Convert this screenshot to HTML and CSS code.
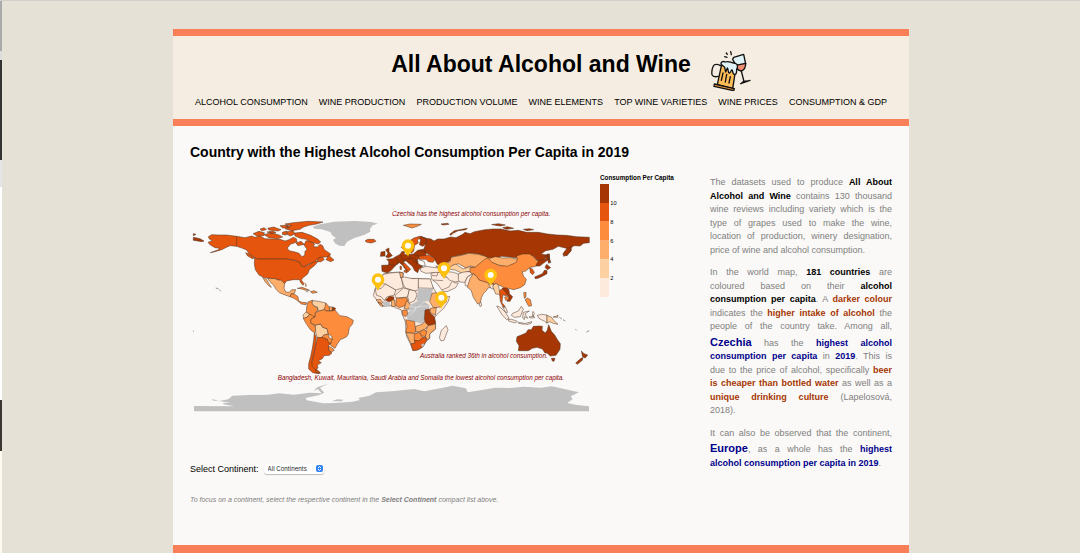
FILE: index.html
```html
<!DOCTYPE html>
<html lang="en">
<head>
  <meta charset="UTF-8" />
  <meta name="viewport" content="width=device-width, initial-scale=1.0" />
  <title>All About Alcohol and Wine</title>
  <link rel="stylesheet" href="styles.css">
</head>
<body>
  <div class="container">
    <header class="site-header">
      <div class="site-title">
        <h1>All About Alcohol and Wine</h1>
        <svg class="logo" viewBox="33 17 120 120" aria-hidden="true">
          <g stroke="#111" stroke-width="4" stroke-linejoin="round" stroke-linecap="round" fill="none">
            <path d="M79 23l3 4M92 19l2 9M74 34l7 2" />
            <path fill="#dff2f7" d="M101 36L131 27L137 56L108 60L98 42Z" />
            <path fill="#f08d72" d="M107 60L137 54C137 66 132 75 124 77C116 76 110 72 109 61Z" />
            <path d="M124 77L132 109M122 115L150 105M123 115L131 108L143 107" />
            <path d="M61 61C57 57 44 54 40 62C36 70 35 82 36 88C40 97 51 94 55 93" />
            <path fill="#ffbd59" d="M65 57L52 118L98 130L107 72Z" />
            <path fill="#dff2f7" d="M63 57C62 46 72 48 76 50C86 45 97 55 106 54C115 57 113 65 110 72C110 82 109 88 103 87C97 87 99 75 96 74C92 73 93 84 88 83C83 82 86 72 82 68L77 80L74 66Z" />
            <path d="M69 83L64 105M80 87L76 110M91 94L87 113" />
            <path fill="#f49a3d" d="M43 116L103 130L101 136L42 123Z" />
          </g>
        </svg>
      </div>
      <nav class="site-nav">
        <a href="#consumption">ALCOHOL CONSUMPTION</a>
        <a href="#production">WINE PRODUCTION</a>
        <a href="#volume">PRODUCTION VOLUME</a>
        <a href="#elements">WINE ELEMENTS</a>
        <a href="#varieties">TOP WINE VARIETIES</a>
        <a href="#prices">WINE PRICES</a>
        <a href="#gdp">CONSUMPTION &amp; GDP</a>
      </nav>
    </header>

    <main class="content" id="consumption">
      <h2>Country with the Highest Alcohol Consumption Per Capita in 2019</h2>
      <div class="columns">
        <section class="map-column">
          <svg class="map" viewBox="15 -90 1500 750" role="img" aria-label="World map of alcohol consumption per capita">
            <defs>
              <g id="pin">
                <path fill="#fec10d" d="M0 0C-4-13-19-20-19-33A19 19 0 0 1 19-33C19-20 4-13 0 0Z" />
                <circle fill="#fff" cy="-33" r="9" />
              </g>
            </defs>

            <!-- Americas -->
            <g class="land">
              <path class="l12" d="M25 101l8 2-8 4zM25 112l20 4 12 7-6 2-26-4z" />
              <path class="l10" d="M70 110L80 104L100 105L125 105L155 109L180 113L200 108L210 112L225 108L240 116L262 117L285 118L300 123L312 119L325 112L334 116L336 126L316 133L307 144L312 152L330 156L342 160L351 170L359 166L360 154L366 148L357 135L363 122L378 124L388 132L386 140L397 141L405 133L413 137L418 149L437 162L432 170L412 172L398 177L388 188L372 192L357 200L349 198L345 188L328 181L305 177L218 177L207 172L192 161L185 150L170 144L155 139L135 137L122 143L110 149L90 155L76 158L98 150L104 145L90 143L76 135L69 127L82 122L73 117Z" />
              <path class="border" d="M155 109V139" />
              <path class="l10" d="M209 174L218 177L305 177L328 181L345 188L349 198L357 200L372 194L388 185L400 184L388 197L373 209L368 222L353 234L349 240L357 251L354 256L346 246L344 239L325 239L304 243L299 251L289 241L279 240L270 236L248 235L235 232L222 225L211 209L208 192Z" />
              <path class="l10" d="M399 174l13-3 6 8-12 7-9-2zM423 179l8-13 16 14-10 5zM182 158l12 5 14 11-6 2-15-9z" />
              <path class="l10" d="M204 101L222 94L238 98L236 107L216 108ZM237 104L258 98L282 105L293 111L278 116L252 113ZM225 87L238 83L244 89L230 92ZM248 85L266 81L288 89L279 93L252 90ZM292 97L305 93L304 105L293 104ZM306 95L325 92L329 102L316 108L306 103ZM246 96l17-3 10 5-13 3z" />
              <path class="l10" d="M328 99L351 97L377 106L398 117L407 126L400 132L378 127L364 118L346 115L330 108ZM333 129l15-5 10 9-19 4zM285 77l22-2 6 8-20 1z" />
              <path class="l10" d="M300 72L325 68L370 64L414 66L395 72L372 76L356 81L345 88L320 92L300 86L313 82L303 78L320 77Z" />
              <path class="l6" d="M248 235L270 236L279 240L289 241L299 251L297 265L302 276L313 277L320 269L332 269L328 280L318 282L315 290L300 285L283 278L273 268L267 257L253 243ZM233 232L244 238L259 262L253 259L240 245Z" />
              <path class="l8" d="M315 290L319 281L329 283L339 290L341 303L351 307L365 308L363 314L349 312L335 300L327 295Z" />
              <path class="l8" d="M337 265L352 262L374 271L363 271L347 266ZM376 275l11-3 10 5-14 3zM359 249l5 5-2 7M363 274l7 2" />
              <path class="l8" d="M369 306L383 300L381 309L388 319L398 323L397 334L391 337L390 352L378 347L364 337L365 320Z" />
              <path class="l4" d="M383 302L402 304L423 309L424 318L417 329L401 334L397 321L386 317L381 309Z" />
              <path class="l8" d="M423 310L432 320L434 332L423 333L418 326Z" />
              <path class="l6" d="M433 320L443 321L441 333L434 332Z" />
              <path class="l12" d="M443 321L452 325L447 334L441 332Z" />
              <path class="l4" d="M363 336L374 342L368 351L356 356L354 345Z" />
              <path class="l8" d="M355 355L368 351L374 342L390 352L379 357L377 369L389 376L393 389L389 399L376 389L361 367Z" />
              <path class="l4" d="M391 375L407 372L413 382L426 386L430 401L416 406L410 413L397 413L392 397Z" />
              <path class="l8" d="M378 357L390 351L392 337L401 334L417 329L424 333L440 333L450 330L459 341L465 347L486 350L505 361L503 371L493 383L490 402L484 411L466 419L457 432L450 445L438 437L431 428L442 419L440 408L430 402L426 386L413 382L407 372L391 375L377 369Z" />
              <path class="l8" d="M411 412L416 405L430 403L433 414L441 417L438 430L428 429L427 418Z" />
              <path class="l8" d="M430 438L443 445L448 451L440 455L430 452Z" />
              <path class="l10" d="M388 399L394 412L391 440L387 462L381 485L384 500L397 510L406 518L400 521L383 518L371 507L371 491L377 469L382 445L386 419Z" />
              <path class="l10" d="M397 413L411 412L427 418L431 429L438 429L430 438L431 451L441 459L433 466L417 467L412 476L400 482L409 488L397 495L399 504L391 509L381 499L381 485L387 462L391 440Z" />
              <path class="l10" d="M391 511l4 0 11 9-13-2z" />
              <path class="l10" d="M92 264l8 2M102 268l6 6M24 393l3 1" />
            </g>
            <path class="nodata" d="M383 80L405 73L447 65L510 63L560 66L579 71L563 76L555 86L556 95L542 103L525 109L508 114L486 125L478 138L463 137L450 130L444 119L453 114L441 106L436 96L410 88L388 86Z" />

            <!-- Europe, Africa and Russia -->
            <g class="land" transform="translate(495)">
              <path class="l10" d="M45 123L53 118L72 118L78 124L64 129L51 127Z" />
              <path class="l8" d="M160 76L180 72L214 73L202 79L185 84L174 80Z" />
              <path class="l12" d="M273 72l20-2 4 3-18 2zM299 103L313 92L352 85L348 89L325 92L309 100L303 106Z" />
              <path class="l12" d="M212 109L229 115L243 117L252 123L263 117L282 117L302 111L318 113L338 103L345 97L360 101L373 95L405 89L428 87L453 87L480 93L505 91L530 97L565 97L593 102L622 105L648 106L680 110L718 112L718 128L701 130L690 138L672 137L663 143L664 151L650 168L641 160L654 146L625 139L609 148L587 152L573 162L590 165L584 178L571 195L558 196L563 182L550 169L532 161L520 171L502 174L480 171L455 169L439 174L420 177L403 168L385 162L357 159L333 165L304 171L301 182L288 188L282 201L262 193L256 182L251 174L240 166L226 157L222 145L229 128L218 120Z" />
              <path class="l12" d="M425 74l20-3 21 4-15 3zM458 83l14-3 19 5-22 3zM520 88l18-2 13 3-20 3zM597 161l3 21-5 5z" />
              <path class="l12" d="M212 109L229 116L228 132L218 139L208 134L212 120L205 113Z" />
              <path class="l10" d="M154 142L161 132L176 125L190 115L208 109L211 113L202 120L205 129L194 136L191 153L184 160L176 148L164 152Z" />
              <path class="l12" d="M107 149L117 144L117 155L127 167L116 173L107 171L114 160ZM93 156L105 154L105 168L91 169Z" />
              <path class="l12" d="M95 196L116 195L116 184L110 178L127 176L137 170L151 163L155 155L163 154L164 164L190 162L203 151L223 147L229 159L226 172L202 177L205 192L218 199L207 208L203 218L194 212L187 199L174 188L168 182L160 186L177 205L170 213L157 195L148 188L137 196L124 211L112 219L96 214Z" />
              <path class="l10" d="M205 169L235 165L256 177L249 187L235 185L228 178L208 178Z" />
              <path class="border" d="M116 193l22 4M137 171l8 12-4 12M151 163l7 17M178 162l2 14-22 5M192 164l14 4M180 174l18 4 2 15M206 179l16 5 4 13-16 1M190 187l12-6M208 151l20 5" />
              <path class="l10" d="M155 188L166 191L182 208L174 215L161 197ZM163 211l11 3-4 5-8-4zM150 198l5 2-1 9-4-1z" />
              <path class="l2" d="M211 205L228 199L248 202L265 204L278 209L273 217L249 218L228 220L213 214Z" />
              <path class="l4" d="M257 198L279 202L288 209L275 210Z" />
              <path class="l2" d="M243 220L257 217L272 218L276 228L298 234L313 248L325 249L317 263L291 275L278 274L262 251L245 238Z" />
              <path class="border" d="M246 226l15 2 2-9M249 240l30 2M276 270l21-9 8-15" />
              <path class="l2" d="M273 210L294 215L310 217L325 222L329 243L316 246L299 241L291 232L281 226Z" />
              <path class="l6" d="M284 193L301 184L303 172L334 166L357 160L385 163L403 168L423 178L412 189L398 194L386 204L361 198L348 204L325 191L305 199L300 207L291 203Z" />
              <path class="l4" d="M296 207L305 197L318 192L339 207L359 200L382 205L368 214L351 215L337 220L315 210Z" />
              <path class="l2" d="M325 222L337 217L351 215L368 215L364 224L352 231L345 247L328 246L325 238Z" />
              <path class="l2" d="M345 247L352 231L364 224L374 222L379 231L370 244L363 260L346 257Z" />
              <!-- Africa -->
              <path class="l2" d="M100 222L120 218L149 216L161 219L158 231L176 238L190 235L204 236L240 237L244 252L252 267L264 286L271 294L299 289L295 304L281 325L260 344L253 354L257 374L256 388L239 402L239 415L228 425L219 441L203 450L188 451L181 431L169 407L166 365L156 342L153 329L137 324L125 316L104 319L92 312L78 297L70 287L75 267L85 243Z" />
              <path class="l2" d="M100 223L120 219L149 217L154 234L160 263L137 270L106 252L85 250Z" />
              <path class="l2" d="M106 252L137 270L133 285L110 291L103 302L93 290L80 286L75 267L93 266Z" />
              <path class="l2" d="M154 233L164 231L188 236L206 235L205 269L195 273L166 264L160 254Z" />
              <path class="l2" d="M205 236L241 237L250 265L205 264Z" />
              <path class="l2" d="M135 286L160 264L178 269L173 291L139 294Z" />
              <path class="l2" d="M173 291L178 269L196 273L201 285L194 302L178 310Z" />
              <path class="l6" d="M149 217L158 218L159 229L152 234Z" />
              <path class="l12" d="M106 300L119 289L132 291L130 302L115 305Z" />
              <path class="l8" d="M139 295L170 293L174 301L165 317L148 323L137 317Z" />
              <path class="nodata" d="M96 305L108 304L119 307L121 320L104 319ZM205 265L249 266L245 285L238 303L210 306L199 299L202 282Z" />
              <path class="l6" d="M78 300l13-2 7 10-5 5zM83 307l10 2 7 11-9-3zM170 301l10 12-4 15-14-2zM124 300l10 0 2 19-11 1z" />
              <path class="nodata" d="M177 318L203 303L226 307L239 316L235 332L223 345L225 359L216 371L194 365L175 360L168 347L178 332Z" />
              <path class="faint" d="M177 318l25 5 20-17M174 334l15-2 12-11 34-3M196 320l-1 13-18 13" />
              <path class="l6" d="M239 305L246 280L258 278L266 287L275 292L290 304L272 321L250 323Z" />
              <path class="l8" d="M157 331L171 330L173 342L166 350L158 344Z" />
              <path class="l12" d="M225 330L238 327L240 338L253 350L257 370L242 377L228 374L223 358Z" />
              <path class="l6" d="M241 325L259 323L256 346L240 337Z" />
              <path class="l8" d="M167 359L181 362L194 365L197 395L190 400L167 397L171 379Z" />
              <path class="l6" d="M197 379L216 373L223 365L235 376L227 386L211 394L197 395Z" />
              <path class="l6" d="M234 377L256 372L257 386L239 402L239 415L229 420L224 399Z" />
              <path class="l6" d="M168 398L190 400L207 398L202 410L196 415L194 431L182 431Z" />
              <path class="l8" d="M193 403L207 397L220 414L207 423L193 423Z" />
              <path class="l8" d="M209 395L221 389L231 395L225 410L214 407Z" />
              <path class="l10" d="M183 432L194 430L195 421L207 423L217 413L228 412L230 421L219 439L205 449L189 452Z" />
              <path class="nodata" d="M213 434l7-4 3 5-6 6z" />
              <path class="l2" d="M289 377L294 389L282 421L273 423L268 413L274 391Z" />
            </g>

            <!-- Asia and Oceania -->
            <g class="land" transform="translate(855)">
              <path class="l8" d="M0 203L15 202L26 193L44 178L61 171L68 187L94 198L129 191L142 177L139 168L158 162L179 162L190 170L199 181L208 184L199 198L179 203L166 214L157 214L160 228L169 238L164 254L151 263L131 269L116 265L105 266L93 258L76 251L62 254L39 245L25 239L16 225L0 217Z" />
              <path class="l6" d="M56 176L76 170L98 174L121 173L142 178L139 187L112 199L85 195L66 187Z" />
              <path class="l6" d="M0 236L10 221L20 229L27 240L55 249L72 252L66 263L55 263L50 271L40 281L34 293L31 310L23 312L10 292L3 270L-8 262Z" />
              <path class="l2" d="M56 252l13 1 2 15-9-4zM27 309l6-2 2 10-5 3z" />
              <path class="l4" d="M68 259L78 249L86 258L88 271L98 277L93 289L86 283L77 282Z" />
              <path class="l10" d="M88 272L99 265L111 272L117 280L109 288L99 284L97 298L96 308L106 320L99 321L91 304Z" />
              <path class="l12" d="M97 265L109 263L117 269L118 281L128 290L120 304L111 304L116 291L108 278Z" />
              <path class="l8" d="M104 291L116 289L116 299L107 301Z" />
              <path class="l10" d="M179 204L187 207L193 217L188 224L181 218Z" />
              <path class="l12" d="M194 231L217 221L224 210L231 212L231 221L217 229L204 235L196 236ZM225 202L230 193L242 203L232 209ZM231 162L238 163L238 178L243 187L236 190L233 175ZM200 191L208 181L228 177L226 166L233 163L235 179L220 190L209 198L198 198Z" />
              <path class="l12" d="M279 161L291 145L304 141L302 153L291 165L281 169Z" />
              <path class="l8" d="M161 278l7-1 0 14-5 4zM165 299l7-5 9 5 4 18-9 2-7-13z" />
              <path class="l2" d="M80 318L90 321L107 338L117 355L110 359L96 344ZM114 358L125 358L142 364L137 369L116 363ZM128 340L145 333L154 319L160 327L151 350L134 352L124 346ZM98 322l9 1 6 14-6 0zM160 337l18-4-13 9 8 13-9-5-1 9-5-5zM145 367l19 3-1 3-17-3zM166 370l20-5-3 5-15 4zM187 341l2-7 4 6-4 10zM177 351l14-3 3 5-12 1z" />
              <path class="l2" d="M202 346L214 343L231 345L231 370L224 364L214 359L207 355Z" />
              <path class="l4" d="M231 346L245 352L251 361L264 373L250 370L239 365L231 369ZM249 351l9-2 6-4-1 7z" />
              <path class="l12" d="M141 410L154 405L168 399L174 389L184 389L190 379L209 378L217 379L216 391L226 399L232 390L236 374L244 394L254 405L263 420L271 431L270 448L258 466L241 468L231 459L225 459L217 447L201 442L187 445L175 452L145 452L147 437L139 424Z" />
              <path class="l12" d="M244 475l11 0-3 9-5-1zM334 453L342 461L353 465L346 474L338 471ZM317 489L333 475L339 473L337 481L322 493Z" />
              <path class="l6" d="M268 352l8 5M279 359l7 4M316 387l4 4M349 396l9-4" />
            </g>

            <!-- Antarctica -->
            <path class="nodata" transform="translate(0 420)" d="M27 214V198L148 199L116 193L113 189L136 188L102 183L130 178L142 167L190 165L250 164L282 160L326 164L374 158L410 160L398 147L385 154L396 142L430 131L405 143L418 158L401 166L362 174L365 181L415 190L450 189L502 185L525 180L520 174L553 167L573 157L620 154L688 147L718 154L766 145L802 137L843 145L848 157L877 152L930 143L975 144L1016 140L1068 143L1100 139L1128 145L1182 157L1157 169L1163 177L1147 189L1171 194L1212 199V214ZM80 177L102 182L85 182ZM441 184L456 178L476 179L470 184Z" />

            <g transform="translate(495)">
              <use href="#pin" x="174" y="170" />
              <use href="#pin" x="84" y="272" />
              <use href="#pin" x="282" y="238" />
              <use href="#pin" x="274" y="326" />
              <use href="#pin" x="422" y="258" />
            </g>

            <g class="map-note">
              <text x="621" y="49">Czechia has the highest alcohol consumption per capita.</text>
              <text x="705" y="473">Australia ranked 36th in alcohol consumption.</text>
              <text x="278" y="541">Bangladesh, Kuwait, Mauritania, Saudi Arabia and Somalia the lowest alcohol consumption per capita.</text>
            </g>

            <g class="legend" transform="translate(1245 -48)">
              <text class="legend-title" y="-12">Consumption Per Capita</text>
              <path class="l12" d="M0 0h27v57H0z" />
              <path class="l10" d="M0 57h27v56H0z" />
              <path class="l8" d="M0 113h27v57H0z" />
              <path class="l6" d="M0 170h27v56H0z" />
              <path class="l4" d="M0 226h27v57H0z" />
              <path class="l2" d="M0 283h27v56H0z" />
              <text x="31" y="63">10</text>
              <text x="31" y="119">8</text>
              <text x="31" y="176">6</text>
              <text x="31" y="232">4</text>
              <text x="31" y="289">2</text>
            </g>
          </svg>

          <div class="filter">
            <label for="continent">Select Continent:</label>
            <span class="select-wrap">
              <select id="continent">
                <option>All Continents</option>
                <option>Africa</option>
                <option>Asia</option>
                <option>Europe</option>
                <option>North America</option>
                <option>Oceania</option>
                <option>South America</option>
              </select>
              <svg class="select-arrows" viewBox="0 0 7 7" aria-hidden="true">
                <path d="M2 3l1.500-1.500L5 3M2 4l1.500 1.500L5 4" />
              </svg>
            </span>
          </div>
          <p class="hint">To focus on a continent, select the respective continent in the <strong>Select Continent</strong> compact list above.</p>
        </section>

        <aside class="story">
          <p>The datasets used to produce <strong>All About Alcohol and Wine</strong> contains 130 thousand wine reviews including variety which is the type of grapes used to make the wine, location of production, winery designation, price of wine and alcohol consumption.</p>
          <p>In the world map, <strong>181 countries</strong> are coloured based on their <strong>alcohol consumption per capita</strong>. A <strong class="brown">darker colour</strong> indicates the <strong class="brown">higher intake of alcohol</strong> the people of the country take. Among all, <strong class="blue place">Czechia</strong> has the <strong class="blue">highest alcohol consumption per capita</strong> in <strong class="blue">2019</strong>. This is due&nbsp;to the price of alcohol, specifically <strong class="brown">beer is&nbsp;cheaper than bottled water</strong> as well as a <strong class="brown">unique drinking culture</strong> (Lapelosová, 2018).</p>
          <p>It can also be observed that the continent, <strong class="blue place">Europe</strong>, as a whole has the <strong class="blue">highest alcohol consumption per capita in 2019</strong>.</p>
        </aside>
      </div>
    </main>
  </div>
</body>
</html>
```
FILE: styles.css
```css
:root {
  --page-bg: #e5e1d6;
  --header-bg: #f5ede1;
  --content-bg: #faf9f7;
  --accent: #f87f57;
  --text-muted: #808080;
  --brown: #a63603;
  --blue: #00008b;
}

* {
  margin: 0;
  padding: 0;
  box-sizing: border-box;
}

body {
  font-family: "Liberation Sans", Arial, sans-serif;
  font-size: 9px;
  line-height: 14px;
  color: #000;
  min-height: 100vh;
  padding: 28px 171px 0 173px;
  border-top: 1px solid #d2d0cd;
  background:
    linear-gradient(#aaa 51px, #ddd 51px 60px, #333 60px 160px, #e5e5e8 160px 187px, #fff 187px 400px, #3c3633 400px 451px, #fffaf0 451px) left top / 2px 100% no-repeat,
    var(--page-bg);
}

.site-header {
  background: var(--header-bg);
  border-top: 7px solid var(--accent);
  border-bottom: 7px solid var(--accent);
  padding: 15px 22px 10px;
}

.site-title {
  display: grid;
  grid-template-columns: 1fr auto 1fr;
}

h1 {
  grid-column: 2;
  font-size: 23px;
  line-height: 26px;
}

.logo {
  width: 40px;
  height: 40px;
  margin-left: 20px;
}

.site-nav {
  display: flex;
  flex-wrap: wrap;
  justify-content: space-between;
  margin-top: 4px;
}

.site-nav a {
  color: #000;
  text-decoration: none;
}

.content {
  background: var(--content-bg);
  border-bottom: 8px solid var(--accent);
  padding: 17px 17px 38px;
}

h2 {
  font-size: 14px;
  line-height: 18px;
  margin-bottom: 9px;
}

.columns {
  display: grid;
  grid-template-columns: minmax(0, 1fr) 182px;
  gap: 20px;
}

/* Map */
.map {
  display: block;
  width: 100%;
}

.land path {
  stroke: #4a3527;
  stroke-width: 1.5;
  stroke-linejoin: round;
}

.land .border {
  fill: none;
}

.land .faint {
  fill: none;
  stroke: #eee;
}

.l2 { fill: #feeadd; }
.l4 { fill: #fdd0a2; }
.l6 { fill: #fdae6b; }
.l8 { fill: #fd8d3c; }
.l10 { fill: #e6550d; }
.l12 { fill: #a63603; }

.nodata,
.land .nodata {
  fill: #c0c0c0;
  stroke: none;
}

.map-note {
  font-size: 19px;
  font-style: italic;
  fill: #8b0000;
}

.legend {
  font-size: 17px;
}

.legend-title {
  font-size: 19px;
  font-weight: bold;
}

/* Continent filter */
.filter {
  display: flex;
  align-items: center;
  gap: 5px;
  margin-top: 42px;
}

.select-wrap {
  position: relative;
  display: flex;
}

.filter select {
  appearance: none;
  width: 60px;
  height: 10px;
  padding: 0 4px;
  border: 0;
  border-radius: 3px;
  background: #fff;
  box-shadow: 0 1px 1px rgba(0, 0, 0, 0.25);
  color: #222;
  font-family: Inter, sans-serif;
  font-size: 6px;
  line-height: 10px;
}

.select-arrows {
  position: absolute;
  top: 1px;
  right: 1px;
  width: 7px;
  height: 7px;
  border-radius: 2px;
  background: #2f83f7;
  fill: none;
  stroke: #fff;
  pointer-events: none;
}

.hint {
  margin-top: 17px;
  font-size: 7px;
  font-style: italic;
  color: var(--text-muted);
}

/* Story text */
.story {
  padding-top: 6px;
  line-height: 1.5;
  text-align: justify;
  color: var(--text-muted);
}

.story p + p {
  margin-top: 9px;
}

.story strong {
  color: #000;
}

.story .brown {
  color: var(--brown);
}

.story .blue {
  color: var(--blue);
}

.story .place {
  font-size: 11px;
}

@media (max-width: 900px) {
  body {
    padding: 28px 16px 0;
  }
}

@media (max-width: 600px) {
  .columns {
    grid-template-columns: 1fr;
  }
}
```
